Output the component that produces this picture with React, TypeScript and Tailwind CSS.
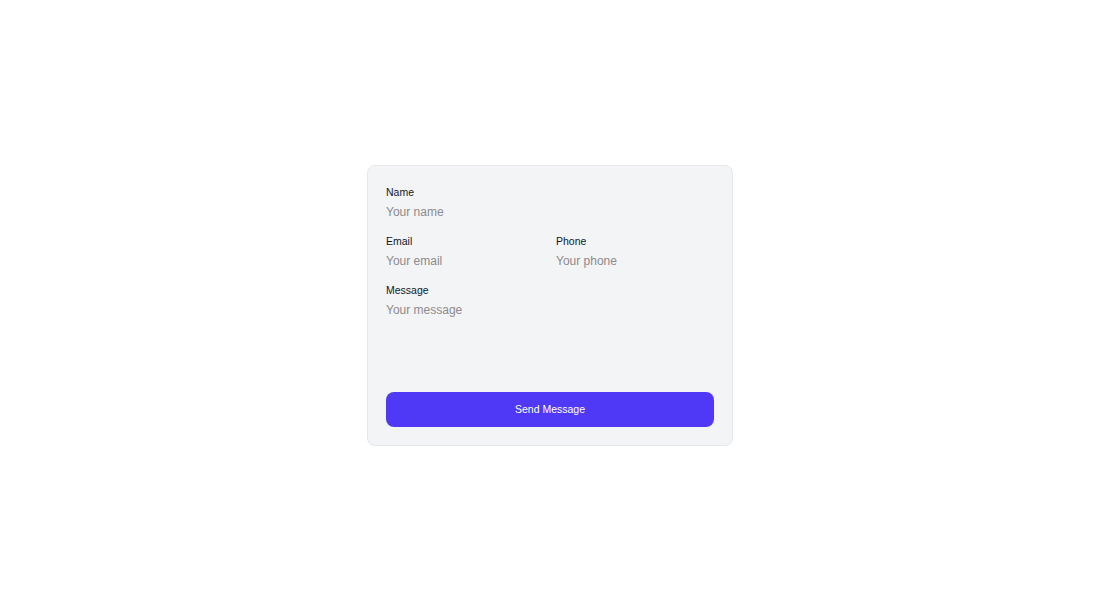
import React from "react";

export default function App() {
  return (
    <div className="min-h-screen w-full bg-white flex items-center justify-center" style={{ fontFamily: '"Liberation Sans", Arial, sans-serif' }}>
      <form
        className="w-[366px] rounded-lg border border-gray-200 bg-gray-100 p-[18px] flex flex-col"
        onSubmit={(e) => e.preventDefault()}
      >
        <div className="flex flex-col gap-[9px]">
          <div className="flex flex-col">
            <label className="pt-px text-[10.5px] leading-[15px] text-gray-900">Name</label>
            <input
              className="h-6 w-full bg-transparent text-xs text-gray-900 outline-none placeholder:text-[#8b8b8b]"
              placeholder="Your name"
            />
          </div>
          <div className="grid grid-cols-2 gap-3">
            <div className="flex flex-col">
              <label className="pt-px text-[10.5px] leading-[15px] text-gray-900">Email</label>
              <input
                className="h-6 w-full bg-transparent text-xs text-gray-900 outline-none placeholder:text-[#8b8b8b]"
                placeholder="Your email"
              />
            </div>
            <div className="flex flex-col">
              <label className="pt-px text-[10.5px] leading-[15px] text-gray-900">Phone</label>
              <input
                className="h-6 w-full bg-transparent text-xs text-gray-900 outline-none placeholder:text-[#8b8b8b]"
                placeholder="Your phone"
              />
            </div>
          </div>
          <div className="flex flex-col">
            <label className="pt-px text-[10.5px] leading-[15px] text-gray-900">Message</label>
            <textarea
              className="h-[82px] w-full resize-none bg-transparent pt-[2px] text-xs leading-5 text-gray-900 outline-none placeholder:text-[#8b8b8b]"
              placeholder="Your message"
            />
          </div>
        </div>
        <button
          type="submit"
          className="mt-3 h-[35px] w-full rounded-lg bg-[#4f39f6] text-[10.5px] text-white"
        >
          Send Message
        </button>
      </form>
    </div>
  );
}
